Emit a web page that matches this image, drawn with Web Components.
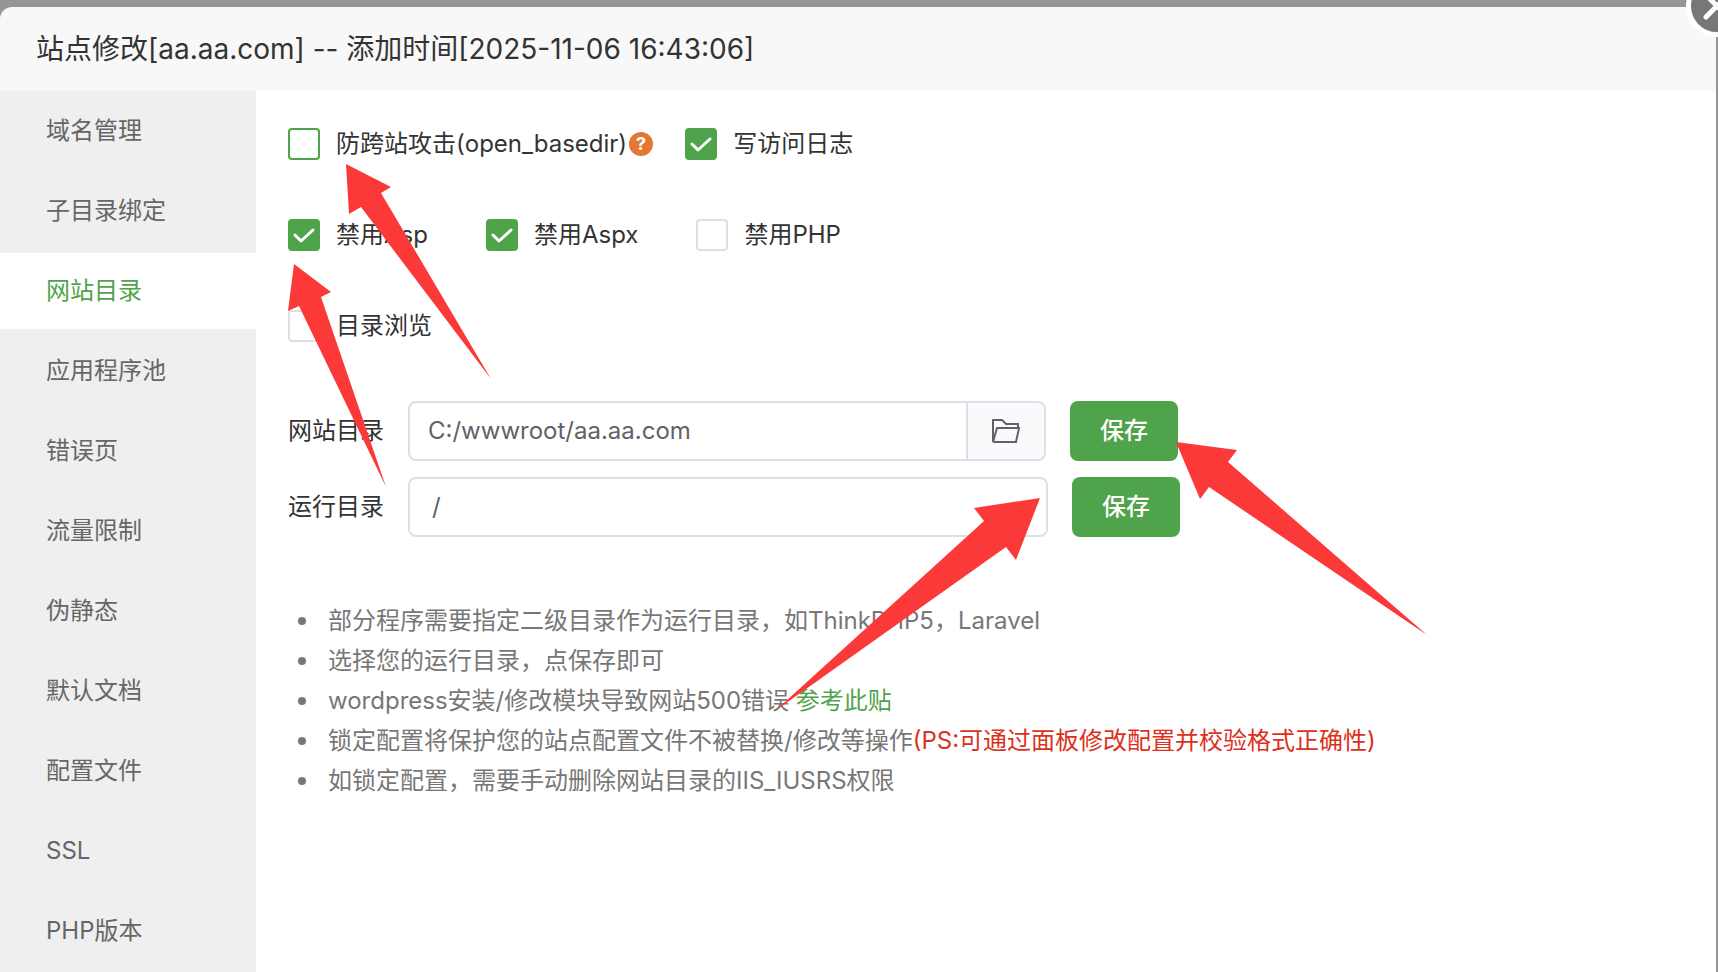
<!DOCTYPE html>
<html lang="zh-CN">
<head>
<meta charset="utf-8">
<title>站点修改</title>
<style>
  body {
    margin: 0;
    background: #969696;
    color: #333;
    font: 24px/32px Inter, "Noto Sans CJK SC", sans-serif;
    overflow: hidden;
  }
</style>
</head>
<body>
<site-dialog>
  <span slot="title">站点修改[aa.aa.com] -- 添加时间[2025-11-06 16:43:06]</span>

  <side-nav slot="nav">
    <nav-item>域名管理</nav-item>
    <nav-item>子目录绑定</nav-item>
    <nav-item active>网站目录</nav-item>
    <nav-item>应用程序池</nav-item>
    <nav-item>错误页</nav-item>
    <nav-item>流量限制</nav-item>
    <nav-item>伪静态</nav-item>
    <nav-item>默认文档</nav-item>
    <nav-item>配置文件</nav-item>
    <nav-item>SSL</nav-item>
    <nav-item>PHP版本</nav-item>
  </side-nav>

  <option-row>
    <check-option focused>防跨站攻击(open_basedir)<help-badge slot="after"></help-badge></check-option>
    <check-option checked>写访问日志</check-option>
  </option-row>
  <option-row wide>
    <check-option checked>禁用Asp</check-option>
    <check-option checked>禁用Aspx</check-option>
    <check-option>禁用PHP</check-option>
  </option-row>
  <option-row>
    <check-option>目录浏览</check-option>
  </option-row>

  <field-group>
    <path-field label="网站目录" value="C:/wwwroot/aa.aa.com"></path-field>
    <dir-select label="运行目录" value="/"></dir-select>
  </field-group>

  <help-list></help-list>
  <mark-arrows slot="marks"></mark-arrows>
</site-dialog>

<script>
const FIELD_CSS = `
  :host { display: flex; align-items: center; }
  * { box-sizing: border-box; }
  label { width: 120px; flex: none; }
  input, select {
    font: inherit;
    color: #606266;
    border: 0;
    outline: 0;
    background: none;
    margin: 0;
  }
  .box {
    display: flex;
    height: 60px;
    border: 2px solid #dcdfe6;
    border-radius: 8px;
    overflow: hidden;
    background: #fff;
    margin-right: 24px;
  }
`;

function define(name, html, setup) {
  customElements.define(name, class extends HTMLElement {
    constructor() {
      super();
      this.attachShadow({ mode: "open" });
    }
    connectedCallback() {
      this.shadowRoot.innerHTML = typeof html === "function" ? html(this) : html;
      if (setup) setup(this, this.shadowRoot);
    }
  });
}

define("site-dialog", `
  <style>
    :host {
      display: flex;
      flex-direction: column;
      position: relative;
      box-sizing: border-box;
      min-height: 100vh;
      padding: 7px 2px 0 0;
    }
    header {
      background: #f8f8f8;
      border-radius: 12px 0 0 0;
      padding: 22px 36px;
      font-size: 28px;
      line-height: 40px;
    }
    h1 { margin: 0; font: inherit; }
    .body { display: flex; flex: 1; background: #fff; }
    main {
      flex: 1;
      display: flex;
      flex-direction: column;
      gap: 59px;
      padding: 37px 32px;
    }
    .close {
      position: absolute;
      top: -25px;
      right: -30px;
      width: 62px;
      height: 62px;
      padding: 0;
      border: 5px solid #fff;
      border-radius: 50%;
      background: #777;
    }
    .close svg { display: block; margin: auto; }
  </style>
  <header><h1><slot name="title"></slot></h1></header>
  <div class="body">
    <slot name="nav"></slot>
    <main><slot></slot></main>
  </div>
  <button class="close" aria-label="关闭">
    <svg width="28" height="28" viewBox="0 0 28 28" fill="none" stroke="#fff" stroke-width="5" stroke-linecap="round"><path d="M3 3l22 22M25 3L3 25"/></svg>
  </button>
  <slot name="marks"></slot>
`);

define("side-nav", `
  <style>
    :host { display: block; width: 256px; flex: none; background: #efefef; }
    nav { display: flex; flex-direction: column; gap: 4px; padding: 2px 0; }
  </style>
  <nav><slot></slot></nav>
`);

define("nav-item", `
  <style>
    :host { display: block; }
    a {
      display: block;
      padding: 22px 0 22px 46px;
      color: #666;
      text-decoration: none;
    }
    :host([active]) a { background: #fff; color: #4fa34a; }
  </style>
  <a href="#"><slot></slot></a>
`);

define("option-row", `
  <style>
    :host { display: flex; gap: 32px; }
    :host([wide]) { gap: 58px; }
  </style>
  <slot></slot>
`);

define("check-option", `
  <style>
    :host { display: flex; align-items: center; }
    label { display: grid; grid-template-columns: 32px auto; column-gap: 16px; align-items: center; }
    input {
      grid-area: 1 / 1;
      appearance: none;
      box-sizing: border-box;
      width: 32px;
      height: 32px;
      margin: 0;
      border: 2px solid #dcdfe6;
      border-radius: 4px;
      background: #fff;
    }
    :host([focused]) input { border-color: #4fa34a; }
    input:checked { background: #4fa34a; border-color: #4fa34a; }
    svg { grid-area: 1 / 1; visibility: hidden; pointer-events: none; }
    input:checked + svg { visibility: visible; }
  </style>
  <label>
    <input type="checkbox">
    <svg width="32" height="32" viewBox="0 0 32 32" fill="none" stroke="#fff" stroke-width="3" stroke-linecap="round" stroke-linejoin="round"><path d="M7 16l6 6L25 11"/></svg>
    <span><slot></slot></span>
  </label>
  <slot name="after"></slot>
`, (el, root) => {
  root.querySelector("input").checked = el.hasAttribute("checked");
});

define("help-badge", `
  <style>
    :host { display: block; margin-left: 2px; }
    a {
      display: block;
      width: 24px;
      height: 24px;
      border-radius: 50%;
      background: #e47736;
      color: #fff;
      font-size: 18px;
      font-weight: 700;
      line-height: 24px;
      text-align: center;
      text-decoration: none;
    }
  </style>
  <a href="#">?</a>
`);

define("save-button", `
  <style>
    :host { display: block; }
    button {
      width: 108px;
      height: 60px;
      padding: 0;
      border: 0;
      border-radius: 8px;
      background: #4fa34a;
      color: #fff;
      font: inherit;
      font-weight: 500;
    }
  </style>
  <button><slot></slot></button>
`);

define("field-group", `
  <style>
    :host { display: flex; flex-direction: column; gap: 16px; }
  </style>
  <slot></slot>
`);

define("path-field", el => `
  <style>
    ${FIELD_CSS}
    input { width: 556px; padding: 0 18px; }
    button {
      display: grid;
      place-items: center;
      width: 78px;
      padding: 0;
      border: 0;
      border-left: 2px solid #dcdfe6;
      background: #fafafc;
    }
  </style>
  <label for="path">${el.getAttribute("label")}</label>
  <div class="box">
    <input id="path" value="${el.getAttribute("value")}">
    <button aria-label="选择目录">
      <svg width="28" height="26" viewBox="0 0 28 26" fill="none" stroke="#606266" stroke-width="2"><path d="M1 24V2h9l4 4h12v4M1 24h23l3-14H5L1 24"/></svg>
    </button>
  </div>
  <save-button>保存</save-button>
`);

define("dir-select", el => `
  <style>
    ${FIELD_CSS}
    .box { position: relative; }
    select { appearance: none; width: 636px; padding: 0 22px; }
    svg { position: absolute; right: 32px; top: 24px; pointer-events: none; }
  </style>
  <label for="dir">${el.getAttribute("label")}</label>
  <div class="box">
    <select id="dir"><option>${el.getAttribute("value")}</option></select>
    <svg width="14" height="8" viewBox="0 0 14 8" fill="none" stroke="#c0c4cc" stroke-width="2"><path d="M1 7l6-6 6 6"/></svg>
  </div>
  <save-button>保存</save-button>
`);

define("help-list", `
  <style>
    :host { display: block; color: #777; line-height: 40px; }
    ul { margin: 5px 0 0; padding: 0 0 0 10px; list-style: none; }
    li { display: flex; align-items: center; white-space: pre; }
    li::before {
      content: "";
      width: 8px;
      height: 8px;
      border-radius: 50%;
      background: #777;
      margin-right: 22px;
    }
    a { color: #4fa34a; text-decoration: none; }
    em { color: #dc3020; font-style: normal; }
  </style>
  <ul>
    <li>部分程序需要指定二级目录作为运行目录，如ThinkPHP5，Laravel</li>
    <li>选择您的运行目录，点保存即可</li>
    <li>wordpress安装/修改模块导致网站500错误 <a href="#">参考此贴</a></li>
    <li>锁定配置将保护您的站点配置文件不被替换/修改等操作<em>(PS:可通过面板修改配置并校验格式正确性)</em></li>
    <li>如锁定配置，需要手动删除网站目录的IIS_IUSRS权限</li>
  </ul>
`);

// hand-drawn pointers laid over the dialog
define("mark-arrows", `
  <style>
    :host { position: absolute; top: 0; left: 0; pointer-events: none; }
    svg { display: block; }
  </style>
  <svg width="1440" height="740" viewBox="0 0 1440 740" fill="#fb3938" aria-hidden="true">
    <path d="M346 164L391 187 381 193 491 379 361 207 349 214z"/>
    <path d="M294 264L331 292 321 297 386 487 299 306 288 311z"/>
    <path d="M1040 498L974 508 984 521 775 711 1006 547 1016 560z"/>
    <path d="M1176 442L1237 450 1228 462 1427 635 1209 487 1200 499z"/>
  </svg>
`);
</script>
</body>
</html>
